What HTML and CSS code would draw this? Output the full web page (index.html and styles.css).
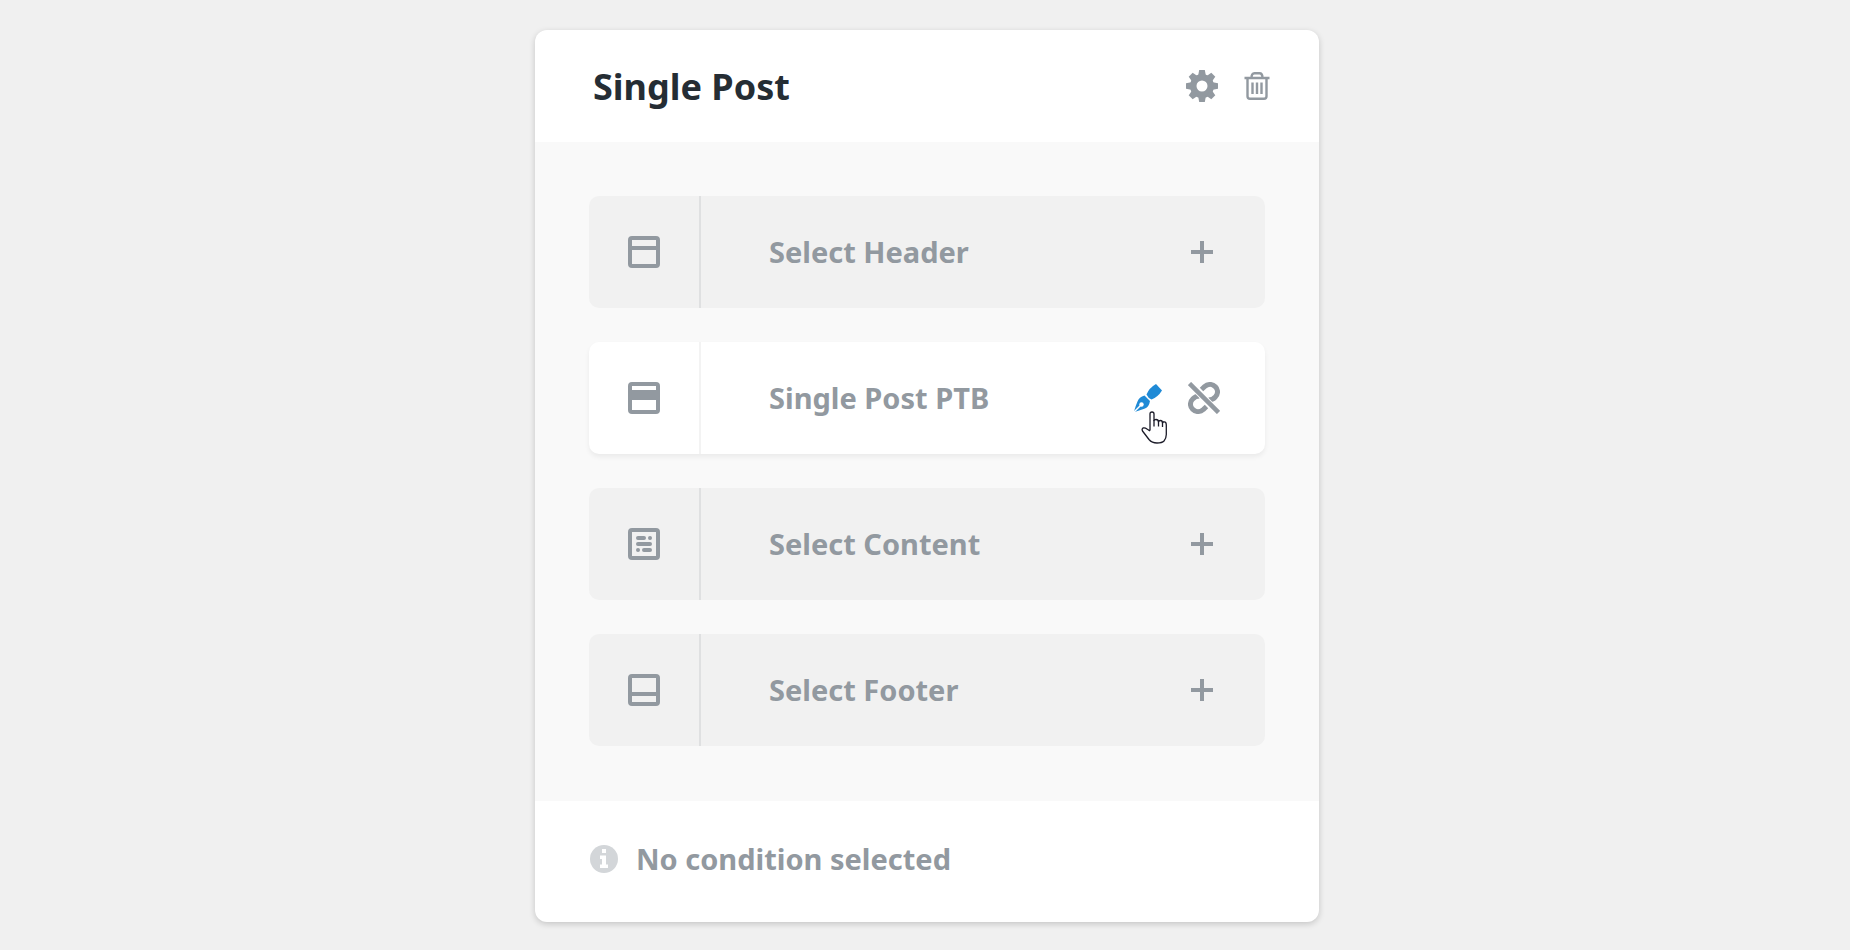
FILE: index.html
```
<!DOCTYPE html>
<html lang="en">
<head>
  <meta charset="utf-8">
  <title>Single Post</title>
  <link rel="stylesheet" href="styles.css">
</head>
<body>
  <main class="card">
    <header class="card-header">
      <h1>Single Post</h1>
      <div class="actions">
        <button type="button" class="icon-btn" aria-label="Settings">
          <svg width="32" height="32" viewBox="0 0 32 32">
            <g fill="currentColor">
              <path fill-rule="evenodd" d="M16 4a12 12 0 1 0 0 24a12 12 0 1 0 0-24zM16 10.500a5.500 5.500 0 1 1 0 11a5.500 5.500 0 1 1 0-11z"/>
              <path id="tooth" d="M12 6.500L13.200 0H18.800L20 6.500z"/>
              <use href="#tooth" transform="rotate(45 16 16)"/>
              <use href="#tooth" transform="rotate(90 16 16)"/>
              <use href="#tooth" transform="rotate(135 16 16)"/>
              <use href="#tooth" transform="rotate(180 16 16)"/>
              <use href="#tooth" transform="rotate(225 16 16)"/>
              <use href="#tooth" transform="rotate(270 16 16)"/>
              <use href="#tooth" transform="rotate(315 16 16)"/>
            </g>
          </svg>
        </button>
        <button type="button" class="icon-btn" aria-label="Delete">
          <svg width="26" height="28" viewBox="0 0 26 28" fill="none" stroke="currentColor" stroke-width="2.400">
            <path d="M0.500 6H25.500M3.500 6V24.200Q3.500 26.700 6 26.700H20Q22.500 26.700 22.500 24.200V6M7.500 6Q7.500 1.300 10.500 1.300H15.500Q18.500 1.300 18.500 6"/>
            <path d="M8.500 10.500V22M13 10.500V22M17.500 10.500V22"/>
          </svg>
        </button>
      </div>
    </header>

    <section class="card-body">
      <div class="row">
        <div class="row-icon">
          <svg width="32" height="32" viewBox="0 0 32 32" fill="none" stroke="currentColor" stroke-width="4">
            <rect x="2" y="2" width="28" height="28" rx="2"/>
            <path d="M2 12H30"/>
          </svg>
        </div>
        <button type="button" class="row-main">
          <span>Select Header</span>
          <svg class="plus" width="22" height="22" viewBox="0 0 22 22"><path d="M11 0V22M0 11H22"/></svg>
        </button>
      </div>

      <div class="row active">
        <div class="row-icon">
          <svg width="32" height="32" viewBox="0 0 32 32" fill="none" stroke="currentColor" stroke-width="4">
            <rect x="2" y="2" width="28" height="28" rx="2"/>
            <path d="M2 13H30" stroke-width="10"/>
          </svg>
        </div>
        <div class="row-main">
          <span>Single Post PTB</span>
          <div class="tools">
            <button type="button" class="icon-btn edit" aria-label="Edit">
              <svg width="28" height="28" viewBox="0 0 28 28">
                <path fill="currentColor" d="M22 0L28 6.500Q24 13 17.500 15.500Q14 14 12.500 10.500Q15 4 22 0z"/>
                <path fill="currentColor" d="M10.500 11.500L16 17Q15 23 11 24.500Q6 26 0.500 28L0 27.500Q1.500 22 3.500 17.500Q5 13 10.500 11.500z"/>
                <path stroke="#fff" stroke-width="1.500" d="M0 28L7 21"/>
                <circle cx="7.500" cy="20.500" r="2.200" fill="#fff"/>
              </svg>
              <svg class="pointer" width="27" height="34" viewBox="0 0 27 34">
                <path fill="#fff" stroke="#1b1b28" stroke-width="1.300" stroke-linejoin="round" d="M9 19.500V3Q9 1 11 1Q13 1 13 3V9.500Q13 8.500 15 8.500Q17.500 8.500 17.500 11Q17.500 9.500 19.500 9.500Q21.500 9.500 21.500 12Q22 10.500 23.500 10.800Q25.300 11 25.300 14V23.500Q25.300 27 23 30Q21 32 16 32Q11 32 8 28.500L1.500 20Q0.500 18 2 17Q4 16.500 6 18L9 20"/>
                <path fill="none" stroke="#1b1b28" stroke-width="1.300" d="M13 9V15.500M17.500 10.500V15.500M21.500 11.500V16"/>
              </svg>
            </button>
            <button type="button" class="icon-btn" aria-label="Unlink">
              <svg width="32" height="32" viewBox="0 0 32 32" fill="none" stroke="currentColor" stroke-width="5">
                <path d="M13.500 7.500L16.500 4.700C20 1.700 24.500 1.700 27.300 4.700C30.300 7.500 30.300 12 27.300 15C25.500 17 23.500 18 20.500 18"/>
                <path d="M18.500 24.500L15.500 27.300C12 30.300 7.500 30.300 4.700 27.300C1.700 24.500 1.700 20 4.700 17C6.500 15 8.500 14 11.500 14"/>
                <path d="M1.500 1.500L30.500 30.500" stroke="#fff" stroke-width="6.500"/>
                <path d="M1.500 1.500L30.500 30.500" stroke-width="4.500"/>
              </svg>
            </button>
          </div>
        </div>
      </div>

      <div class="row">
        <div class="row-icon">
          <svg width="32" height="32" viewBox="0 0 32 32" fill="none" stroke="currentColor" stroke-width="4">
            <rect x="2" y="2" width="28" height="28" rx="2"/>
            <path stroke-linecap="round" d="M10 10H16M22 10H22.010M10 16H22M10 22H10.010M16 22H22"/>
          </svg>
        </div>
        <button type="button" class="row-main">
          <span>Select Content</span>
          <svg class="plus" width="22" height="22" viewBox="0 0 22 22"><path d="M11 0V22M0 11H22"/></svg>
        </button>
      </div>

      <div class="row">
        <div class="row-icon">
          <svg width="32" height="32" viewBox="0 0 32 32" fill="none" stroke="currentColor" stroke-width="4">
            <rect x="2" y="2" width="28" height="28" rx="2"/>
            <path d="M2 20H30"/>
          </svg>
        </div>
        <button type="button" class="row-main">
          <span>Select Footer</span>
          <svg class="plus" width="22" height="22" viewBox="0 0 22 22"><path d="M11 0V22M0 11H22"/></svg>
        </button>
      </div>
    </section>

    <footer class="card-footer">
      <svg width="28" height="28" viewBox="0 0 28 28">
        <circle cx="14" cy="14" r="14" fill="#d3d6d9"/>
        <path fill="#fff" d="M12 4H16V8H12zM10 10.500H16V19.500H18V23H10V19.500H12V14H10z"/>
      </svg>
      <span>No condition selected</span>
    </footer>
  </main>
</body>
</html>
```
FILE: styles.css
```
* {
  box-sizing: border-box;
}
body {
  margin: 0;
  padding: 30px 28px 26px 32px;
  background-color: #f0f0f0;
  color: #9299a0;
  font-family: "Noto Sans", sans-serif;
  font-size: 29px;
  font-weight: 700;
  line-height: 40px;
}
.card {
  max-width: 784px;
  margin: 0 auto;
  background-color: #fff;
  border-radius: 12px;
  box-shadow: 0 2px 6px rgba(0, 0, 0, 0.18);
}
.card-header {
  display: flex;
  align-items: center;
  justify-content: space-between;
  min-height: 112px;
  padding: 0 49px 0 58px;
}
h1 {
  margin: 0;
  padding-top: 2px;
  color: #252d34;
  font-size: 36px;
  line-height: 48px;
}
button {
  border: 0;
  background: none;
  color: inherit;
  font: inherit;
  cursor: pointer;
}
svg {
  display: block;
  flex: none;
}
.actions, .tools {
  display: flex;
  align-items: center;
  gap: 26px;
}
.icon-btn {
  padding: 0;
}
.card-body {
  display: flex;
  flex-direction: column;
  gap: 34px;
  padding: 54px 54px 55px;
  background-color: #f9f9f9;
}
.row {
  display: flex;
  min-height: 112px;
  background-color: #f1f1f1;
  border-radius: 10px;
}
.row-icon {
  display: flex;
  align-items: center;
  justify-content: center;
  width: 112px;
  border-right: 2px solid #dfe0e1;
}
.row-main {
  display: flex;
  flex: 1;
  align-items: center;
  justify-content: space-between;
  padding: 0 52px 0 68px;
  text-align: left;
}
.plus {
  fill: none;
  stroke: currentColor;
  stroke-width: 4;
}
.active {
  background-color: #fff;
  box-shadow: 0 3px 5px rgba(0, 0, 0, 0.06);
}
.active .row-icon {
  border-color: #f3f3f3;
}
.active .row-main {
  padding-right: 45px;
}
.edit {
  position: relative;
  color: #1f8ad6;
}
.pointer {
  position: absolute;
  top: 27px;
  left: 7px;
}
.card-footer {
  display: flex;
  align-items: center;
  gap: 18px;
  min-height: 121px;
  padding: 0 55px 6px;
  border-radius: 0 0 12px 12px;
}
```
